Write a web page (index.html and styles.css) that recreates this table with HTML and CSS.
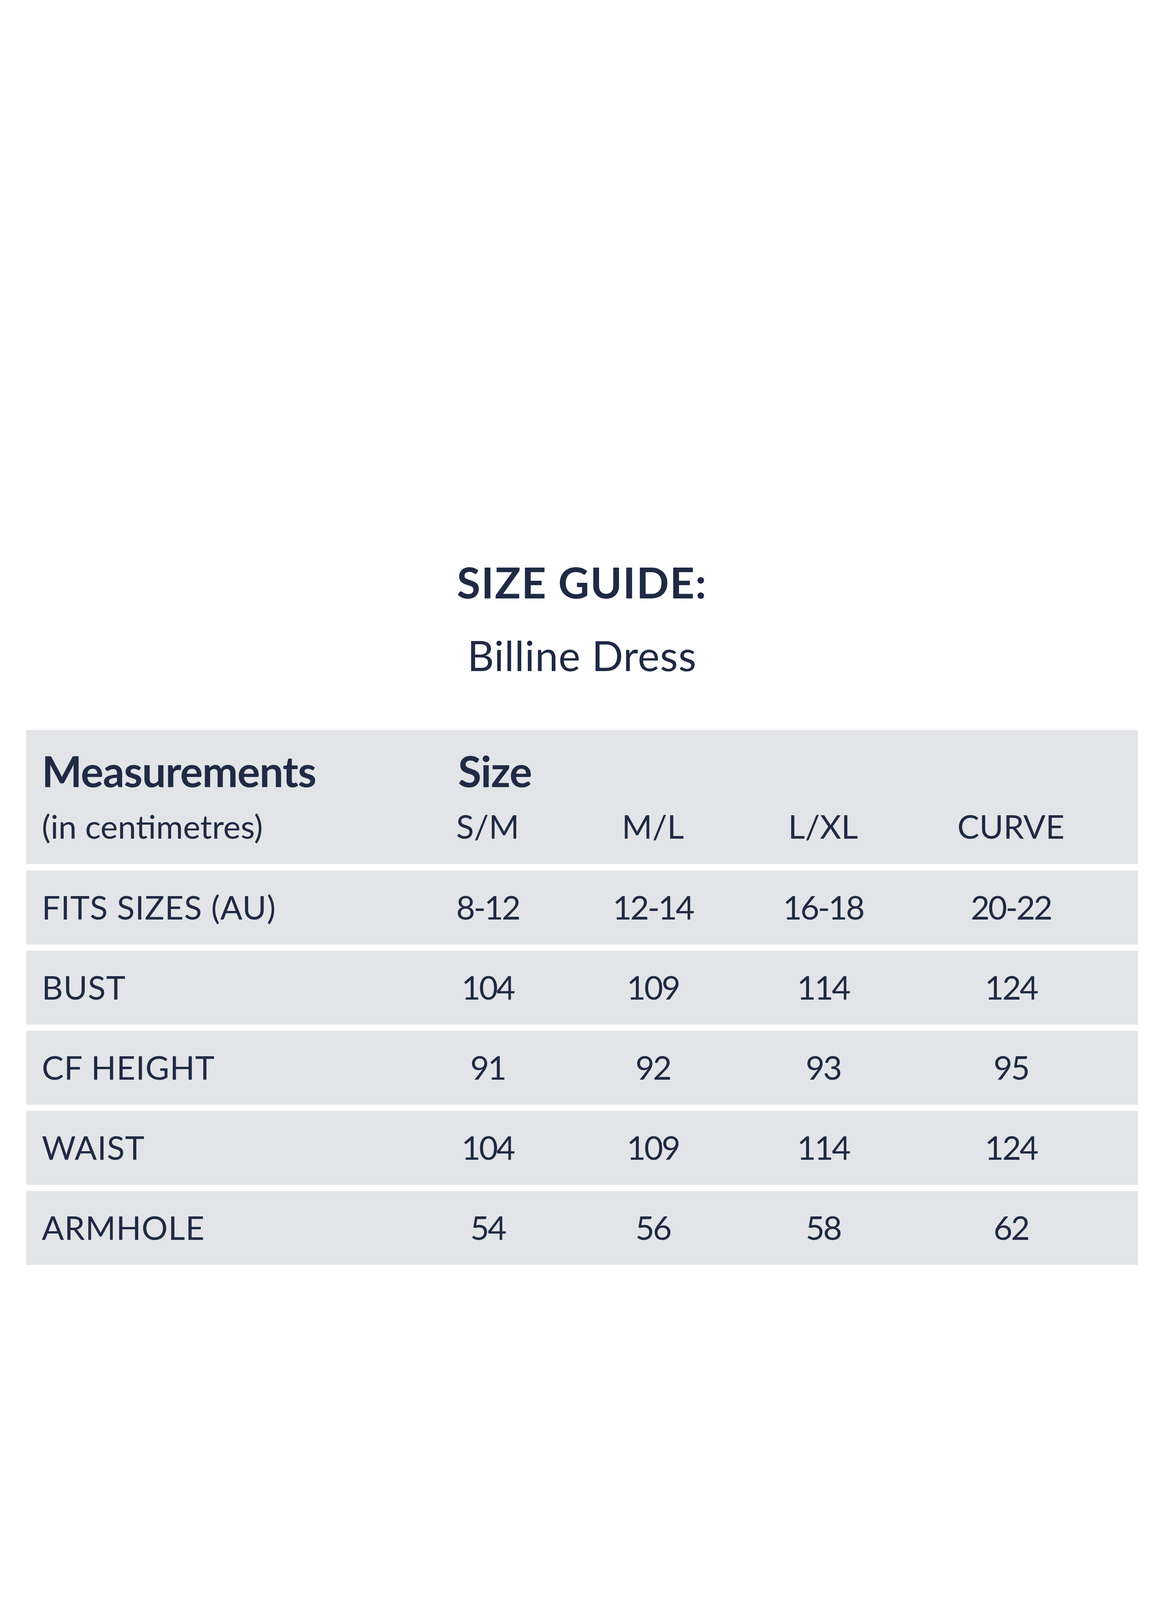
FILE: index.html
```html
<!DOCTYPE html>
<html lang="en">
<head>
<meta charset="utf-8">
<title>Size Guide: Billine Dress</title>
<link rel="stylesheet" href="styles.css">
</head>
<body>
<main class="page">
  <header class="heading">
    <h1 class="title">SIZE GUIDE:</h1>
    <p class="subtitle">Billine Dress</p>
  </header>
  <section class="table">
    <div class="row row-head">
      <div class="head-label">Measurements</div>
      <div class="head-size">Size</div>
      <div class="unit">(in centimetres)</div>
      <div class="cell">S/M</div>
      <div class="cell">M/L</div>
      <div class="cell">L/XL</div>
      <div class="cell">CURVE</div>
    </div>
    <div class="row">
      <div class="label">FITS SIZES (AU)</div>
      <div class="cell num">8-12</div>
      <div class="cell num">12-14</div>
      <div class="cell num">16-18</div>
      <div class="cell num">20-22</div>
    </div>
    <div class="row">
      <div class="label">BUST</div>
      <div class="cell num">104</div>
      <div class="cell num">109</div>
      <div class="cell num">114</div>
      <div class="cell num">124</div>
    </div>
    <div class="row">
      <div class="label">CF HEIGHT</div>
      <div class="cell num">91</div>
      <div class="cell num">92</div>
      <div class="cell num">93</div>
      <div class="cell num">95</div>
    </div>
    <div class="row">
      <div class="label">WAIST</div>
      <div class="cell num">104</div>
      <div class="cell num">109</div>
      <div class="cell num">114</div>
      <div class="cell num">124</div>
    </div>
    <div class="row">
      <div class="label">ARMHOLE</div>
      <div class="cell num">54</div>
      <div class="cell num">56</div>
      <div class="cell num">58</div>
      <div class="cell num">62</div>
    </div>
  </section>
</main>
</body>
</html>
```
FILE: styles.css
```css
html, body {
  margin: 0;
  padding: 0;
  background: #ffffff;
}
body {
  font-family: Lato, "Open Sans", "Liberation Sans", sans-serif;
  color: #1f2a44;
}
.page {
  padding-top: 1434px;
  padding-left: 67px;
  padding-right: 67px;
}
.heading {
  text-align: center;
}
.title {
  margin: 0;
  font-size: 110px;
  line-height: 110px;
  font-weight: 700;
  letter-spacing: 2px;
}
.subtitle {
  margin: 80px 0 0;
  font-size: 106px;
  line-height: 106px;
  font-weight: 400;
  letter-spacing: 1px;
}
.table {
  margin-top: 139px;
  display: flex;
  flex-direction: column;
  gap: 16px;
}
.row {
  display: grid;
  grid-template-columns: 982px 400px 446px 426px 536px;
  padding-right: 57px;
  background: #e2e4e7;
  height: 189px;
  align-items: center;
  font-size: 84px;
  line-height: 84px;
  padding-bottom: 4px;
  box-sizing: border-box;
}
.row-head {
  height: 343px;
  grid-template-rows: 109px 84px;
  row-gap: 46px;
  align-content: start;
  padding-top: 49px;
  padding-bottom: 0;
  margin-bottom: 1px;
}
.head-label, .head-size {
  font-size: 109px;
  line-height: 109px;
  font-weight: 700;
  letter-spacing: -1.5px;
}
.head-label {
  padding-left: 40px;
}
.head-size {
  grid-column: 2 / 6;
  padding-left: 124px;
}
.unit, .label {
  padding-left: 40px;
  white-space: nowrap;
}
.label {
  letter-spacing: 1px;
}
.cell {
  text-align: center;
  white-space: nowrap;
}
.num {
  letter-spacing: -4px;
}
```
